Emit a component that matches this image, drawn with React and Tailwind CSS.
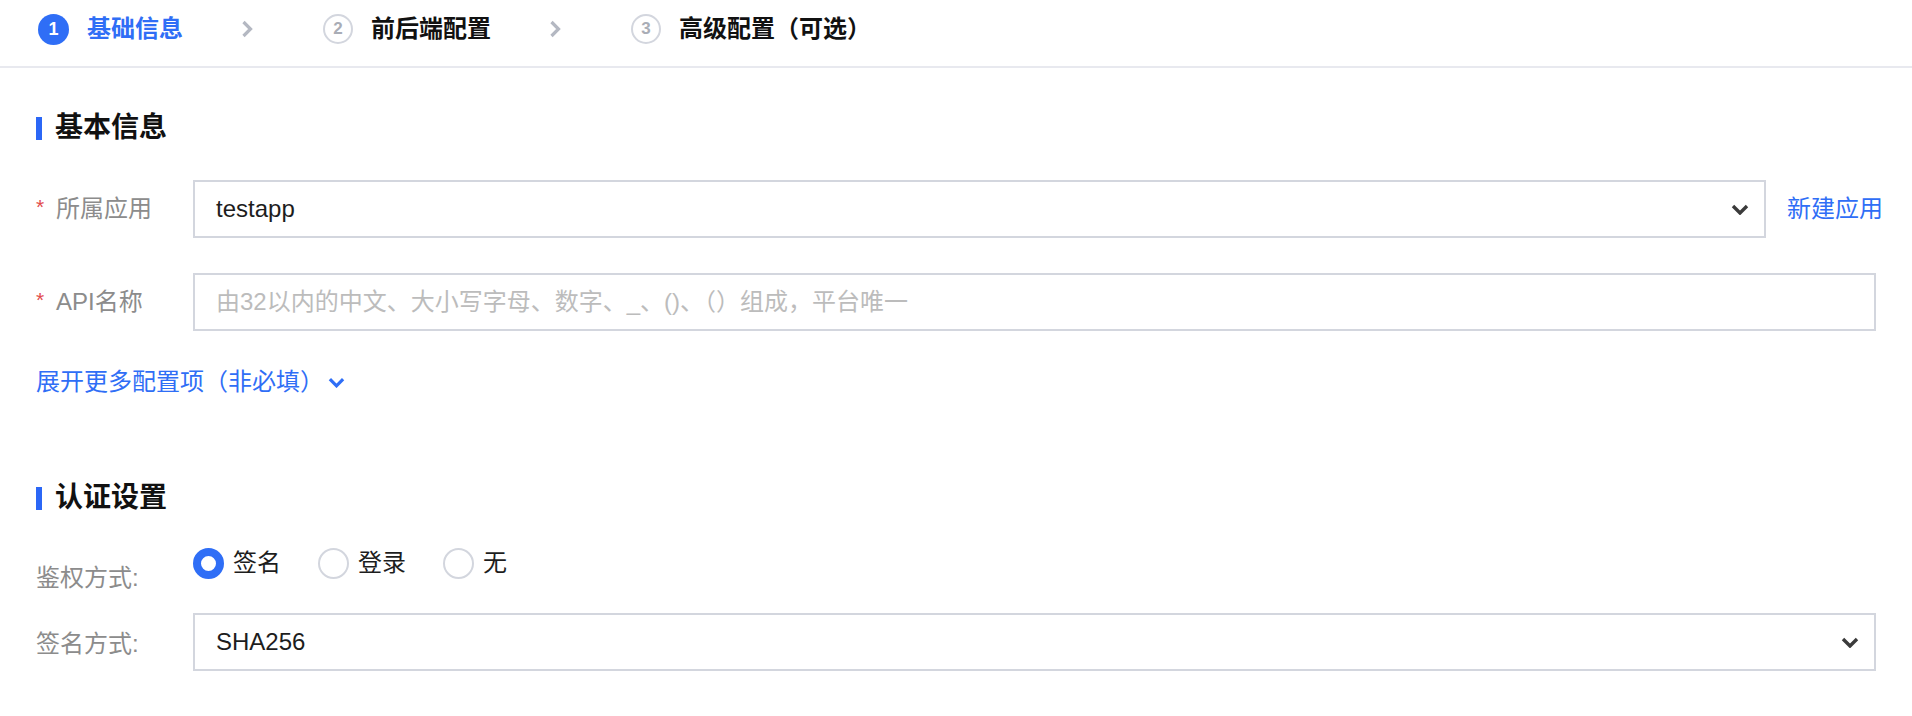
import React from 'react';

const steps = [
  { n: '1', label: '基础信息', active: true },
  { n: '2', label: '前后端配置' },
  { n: '3', label: '高级配置（可选）' },
];

function ChevronDown({ className }) {
  return (
    <svg viewBox="0 0 18 11" className={className} fill="none">
      <path d="M2 2l7 7 7-7" stroke="currentColor" strokeWidth="3.4" />
    </svg>
  );
}

function ChevronRight({ className }) {
  return (
    <svg viewBox="0 0 12 18" className={className} fill="none">
      <path d="M2.5 2l7 7-7 7" stroke="currentColor" strokeWidth="3.2" />
    </svg>
  );
}

function SectionTitle({ children, className }) {
  return (
    <div className={'flex items-center h-[36px] ' + className}>
      <span className="w-[6px] h-[23px] bg-[#2b67f6] mr-[13px]" />
      <span className="text-[28px] leading-[36px] font-bold text-[#111]">{children}</span>
    </div>
  );
}

function Label({ required, children }) {
  return (
    <div className="w-[157px] flex-none flex items-center text-[24px] leading-[32px] text-[#8c8c8c]">
      {required && <span className="text-[#e24c4c] text-[21px] w-[20px] -mt-[4px]">*</span>}
      <span>{children}</span>
    </div>
  );
}

function Select({ value, className }) {
  return (
    <div className={'h-[58px] border-2 border-[#d3d6de] flex items-center pl-[21px] pr-[15px] ' + className}>
      <span className="flex-1 text-[24px] text-[#1d1d1d]">{value}</span>
      <ChevronDown className="w-[18px] h-[11px] text-[#3b3b3b]" />
    </div>
  );
}

function Radio({ checked, label, className }) {
  return (
    <div className={'flex items-center ' + (className || '')}>
      <span
        className={
          'w-[31px] h-[31px] rounded-full bg-white ' +
          (checked ? 'border-[8px] border-[#2f6ef6]' : 'border-2 border-[#d3d6de]')
        }
      />
      <span className="ml-[9px] text-[24px] leading-[32px] text-[#1d1d1d]">{label}</span>
    </div>
  );
}

export default function App() {
  return (
    <div className="w-[1912px] h-[716px] bg-white overflow-hidden font-['Liberation_Sans','Noto_Sans_CJK_SC',sans-serif]">
      {/* steps */}
      <div className="h-[68px] border-b-2 border-[#e8e9ef] pl-[38px] pt-[14px]">
        <div className="flex items-center h-[30px]">
          {steps.map((s, i) => (
            <React.Fragment key={s.n}>
              {i > 0 && <ChevronRight className="ml-[58px] mr-[70px] w-[12px] h-[18px] text-[#b4b8c2]" />}
              <span
                className={
                  'rounded-full flex items-center justify-center font-bold ' +
                  (s.active
                    ? 'w-[31px] h-[31px] bg-[#2f6ef6] text-white text-[18px]'
                    : 'w-[30px] h-[30px] border-2 border-[#d3d6de] text-[#a9adb6] text-[17px]')
                }
              >
                {s.n}
              </span>
              <span
                className={
                  'ml-[18px] text-[24px] leading-[30px] font-bold ' +
                  (s.active ? 'text-[#2f6ef6]' : 'text-[#111]')
                }
              >
                {s.label}
              </span>
            </React.Fragment>
          ))}
        </div>
      </div>

      <div className="px-[36px]">
        <SectionTitle className="mt-[42px]">基本信息</SectionTitle>

        <div className="flex items-center mt-[34px]">
          <Label required>所属应用</Label>
          <Select value="testapp" className="w-[1573px] flex-none" />
          <span className="ml-[21px] text-[24px] text-[#2f6ef6] whitespace-nowrap">新建应用</span>
        </div>

        <div className="flex items-center mt-[35px]">
          <Label required>API名称</Label>
          <div className="flex-1 h-[58px] border-2 border-[#d3d6de] flex items-center pl-[21px] text-[24px] text-[#bcbcbc]">
            由32以内的中文、大小写字母、数字、_、()、（）组成，平台唯一
          </div>
        </div>

        <div className="flex items-center mt-[35px] h-[32px] text-[24px] text-[#2f6ef6]">
          <span>展开更多配置项（非必填）</span>
          <ChevronDown className="ml-[4px] w-[17px] h-[11px]" />
        </div>

        <SectionTitle className="mt-[82px]">认证设置</SectionTitle>

        <div className="flex items-start mt-[31px] h-[32px]">
          <div className="mt-[15px]">
            <Label>鉴权方式:</Label>
          </div>
          <div className="flex items-center h-[32px]">
            <Radio checked label="签名" />
            <Radio label="登录" className="ml-[37px]" />
            <Radio label="无" className="ml-[37px]" />
          </div>
        </div>

        <div className="flex items-center mt-[34px]">
          <div className="pt-[4px]">
            <Label>签名方式:</Label>
          </div>
          <Select value="SHA256" className="flex-1" />
        </div>
      </div>
    </div>
  );
}
